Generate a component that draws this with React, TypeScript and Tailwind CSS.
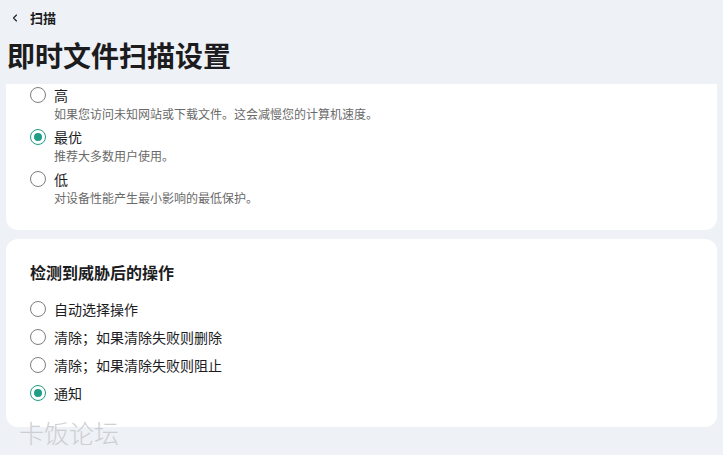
import { ChevronLeft } from 'lucide-react';

type Option = { label: string; desc?: string; checked?: boolean };

const sensitivity: Option[] = [
  { label: '高', desc: '如果您访问未知网站或下载文件。这会减慢您的计算机速度。' },
  { label: '最优', desc: '推荐大多数用户使用。', checked: true },
  { label: '低', desc: '对设备性能产生最小影响的最低保护。' },
];

const actions: Option[] = [
  { label: '自动选择操作' },
  { label: '清除；如果清除失败则删除' },
  { label: '清除；如果清除失败则阻止' },
  { label: '通知', checked: true },
];

function Radio({ checked }: { checked?: boolean }) {
  return checked ? (
    <span className="w-4 h-4 rounded-full border-[1.5px] border-[#1f9d86] flex items-center justify-center shrink-0">
      <span className="w-2 h-2 rounded-full bg-[#1f9d86]" />
    </span>
  ) : (
    <span className="w-4 h-4 rounded-full border-[1.5px] border-[#7d7d7d] shrink-0" />
  );
}

export default function App() {
  return (
    <div className="w-[723px] h-[455px] bg-[#eef1f6] relative overflow-hidden text-[#1c1c1e] [font-family:'Noto_Sans_CJK_SC','Noto_Sans',sans-serif]">
      <div className="pt-[10px] pl-[9px] flex items-center gap-[9px] h-[26px]">
        <ChevronLeft className="w-3 h-3" strokeWidth={2.25} />
        <span className="text-[13px] font-bold leading-4">扫描</span>
      </div>
      <h1 className="pl-[7px] mt-[11px] text-[28px] font-bold leading-[36px]">即时文件扫描设置</h1>

      <div className="mt-[11px] mx-[6px] bg-white rounded-b-xl pl-[24px] pt-[1px] pb-[23px]">
        {sensitivity.map((o) => (
          <div key={o.label} className="mb-1 last:mb-0">
            <div className="flex items-center gap-[8px] h-5">
              <Radio checked={o.checked} />
              <span className="text-[14px] leading-5">{o.label}</span>
            </div>
            <div className="pl-[24px] text-[12px] leading-[18px] text-[#6a6a6a]">{o.desc}</div>
          </div>
        ))}
      </div>

      <div className="mt-[9px] mx-[6px] bg-white rounded-xl pl-[24px] pt-[21px] pb-[20px]">
        <h2 className="text-[16px] font-bold leading-6 mb-[11px]">检测到威胁后的操作</h2>
        {actions.map((o) => (
          <div key={o.label} className="flex items-center gap-[8px] h-7">
            <Radio checked={o.checked} />
            <span className="text-[14px] leading-5">{o.label}</span>
          </div>
        ))}
      </div>

      <div className="absolute left-[19px] top-[416px] text-[25px] font-light leading-8 text-[#c9cbce] opacity-90">卡饭论坛</div>
    </div>
  );
}
